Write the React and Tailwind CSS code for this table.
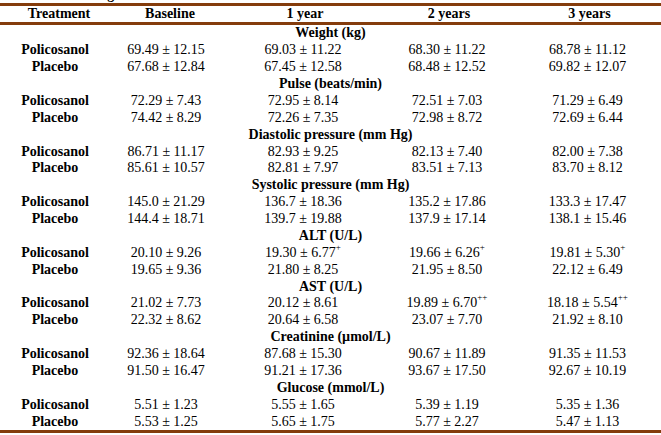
const GROUPS = [
  { title: 'Weight (kg)', rows: [['69.49 ± 12.15', '69.03 ± 11.22', '68.30 ± 11.22', '68.78 ± 11.12'], ['67.68 ± 12.84', '67.45 ± 12.58', '68.48 ± 12.52', '69.82 ± 12.07']] },
  { title: 'Pulse (beats/min)', rows: [['72.29 ± 7.43', '72.95 ± 8.14', '72.51 ± 7.03', '71.29 ± 6.49'], ['74.42 ± 8.29', '72.26 ± 7.35', '72.98 ± 8.72', '72.69 ± 6.44']] },
  { title: 'Diastolic pressure (mm Hg)', rows: [['86.71 ± 11.17', '82.93 ± 9.25', '82.13 ± 7.40', '82.00 ± 7.38'], ['85.61 ± 10.57', '82.81 ± 7.97', '83.51 ± 7.13', '83.70 ± 8.12']] },
  { title: 'Systolic pressure (mm Hg)', rows: [['145.0 ± 21.29', '136.7 ± 18.36', '135.2 ± 17.86', '133.3 ± 17.47'], ['144.4 ± 18.71', '139.7 ± 19.88', '137.9 ± 17.14', '138.1 ± 15.46']] },
  { title: 'ALT (U/L)', rows: [['20.10 ± 9.26', ['19.30 ± 6.77', '+'], ['19.66 ± 6.26', '+'], ['19.81 ± 5.30', '+']], ['19.65 ± 9.36', '21.80 ± 8.25', '21.95 ± 8.50', '22.12 ± 6.49']] },
  { title: 'AST (U/L)', rows: [['21.02 ± 7.73', '20.12 ± 8.61', ['19.89 ± 6.70', '++'], ['18.18 ± 5.54', '++']], ['22.32 ± 8.62', '20.64 ± 6.58', '23.07 ± 7.70', '21.92 ± 8.10']] },
  { title: 'Creatinine (µmol/L)', rows: [['92.36 ± 18.64', '87.68 ± 15.30', '90.67 ± 11.89', '91.35 ± 11.53'], ['91.50 ± 16.47', '91.21 ± 17.36', '93.67 ± 17.50', '92.67 ± 10.19']] },
  { title: 'Glucose (mmol/L)', rows: [['5.51 ± 1.23', '5.55 ± 1.65', '5.39 ± 1.19', '5.35 ± 1.36'], ['5.53 ± 1.25', '5.65 ± 1.75', '5.77 ± 2.27', '5.47 ± 1.13']] },
]

const LABELS = ['Policosanol', 'Placebo']

function Value({ v }) {
  if (Array.isArray(v)) {
    return (
      <span>
        {v[0]}
        <span className="text-[9px] leading-[9px] align-top relative top-[-2px]">{v[1]}</span>
      </span>
    )
  }
  return <span>{v}</span>
}

export default function App() {
  return (
    <div className="w-[661px] h-[435px] bg-white text-black text-[14px] leading-[16px] overflow-hidden"
      style={{ fontFamily: '"Liberation Serif", "Times New Roman", serif' }}>
      {/* caption cut off at top */}
      <div className="h-[3px] overflow-hidden">
        <div className="-mt-[13px] pl-[24px] font-bold">Table 3. Changes in</div>
      </div>
      <div className="border-t-[3px] border-b-[3px] border-[#843c0c]">
        <div className="grid grid-cols-[110px_120px_150px_138px_143px] h-[16px] font-bold">
          <div className="text-center pl-[8px]">Treatment</div>
          <div className="text-center">Baseline</div>
          <div className="text-center">1 year</div>
          <div className="text-center">2 years</div>
          <div className="text-center">3 years</div>
        </div>
      </div>
      <div className="border-b-[3px] border-[#843c0c] grid grid-cols-[110px_120px_150px_138px_143px] auto-rows-[16.875px] items-center">
        {GROUPS.map((g) => (
          <div key={g.title} className="contents">
            <div className="col-span-5 text-center font-bold">{g.title}</div>
            {g.rows.map((r, i) => (
              <div key={i} className="contents">
                <div className="text-center font-bold">{LABELS[i]}</div>
                {r.map((v, j) => (
                  <div key={j} className={`text-center ${j === 0 ? 'pr-[8px]' : 'pr-[4px]'}`}>
                    <Value v={v} />
                  </div>
                ))}
              </div>
            ))}
          </div>
        ))}
      </div>
    </div>
  )
}
